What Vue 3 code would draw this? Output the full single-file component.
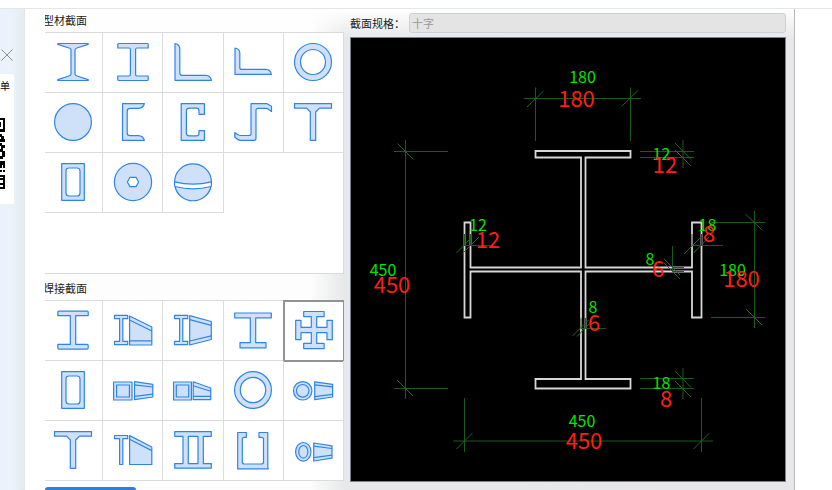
<script setup>
import { ref } from 'vue'

const T_SHAPE = 'M-18.5 -18.3H18.5V-13.8H6.5L2.7 -10V18.3H-2.7V-10L-6.5 -13.8H-18.5Z'
const BOX = 'M-11.3 -18.3H11.3V18.3H-11.3ZM-4 -14Q-7 -14 -7 -11V11Q-7 14 -4 14H4Q7 14 7 11V-11Q7 -14 4 -14Z'
const SMALL_I = 'M-18.5 -14.7H-5.3V-11.3H-10.2V11.3H-5.3V14.7H-18.5V11.3H-13.4V-11.3H-18.5Z'

function ring(r, cx = 0, cy = 0, ry = r) {
  return `M${cx - r} ${cy}a${r} ${ry} 0 1 0 ${2 * r} 0a${r} ${ry} 0 1 0 ${-2 * r} 0Z`
}

const profiles = [
  { name: '工字钢', d: 'M-15.2 -18.5H15.2V-17.6L4 -14Q2 -13.4 2 -12V12Q2 13.4 4 14L15.2 17.6V18.5H-15.2V17.6L-4 14Q-2 13.4 -2 12V-12Q-2 -13.4 -4 -14L-15.2 -17.6Z' },
  { name: 'H型钢', d: 'M-14.2 -18.5H14.2Q15.2 -18.5 15.2 -17.5V-14H4Q2.6 -14 2.6 -12.6V12.6Q2.6 14 4 14H15.2V17.5Q15.2 18.5 14.2 18.5H-14.2Q-15.2 18.5 -15.2 17.5V14H-4Q-2.6 14 -2.6 12.6V-12.6Q-2.6 -14 -4 -14H-15.2V-17.5Q-15.2 -18.5 -14.2 -18.5Z' },
  { name: '等边角钢', d: 'M-18 -18.5Q-13.2 -17.5 -13.2 -13V11Q-13.2 13.3 -11 13.3H13Q17.5 13.5 18.4 18.3H-18Z' },
  { name: '不等边角钢', d: 'M-18 -14Q-13.2 -13 -13.2 -9V5.4Q-13.2 7.4 -11.2 7.4H13Q17.5 7.6 18.4 12.4H-18Z' },
  { name: '圆管', d: ring(18.5) + ring(12.5) },
  { name: '圆钢', d: ring(18.4) },
  { name: '槽钢', d: 'M-10.5 -18.3H11.4Q10 -13.9 5.5 -13.7H-3Q-5.8 -13.7 -5.8 -11V11Q-5.8 13.7 -3 13.7H5.5Q10 13.9 11.4 18.3H-10.5Z' },
  { name: 'C型钢', d: 'M-11.8 -18.3H11.4V-7.7H6V-11Q6 -13.8 3.4 -13.8H-3.6Q-6.6 -13.8 -6.6 -11V11Q-6.6 13.8 -3.6 13.8H3.4Q6 13.8 6 11V8.7H11.4V18.3H-11.8Z' },
  { name: 'Z型钢', d: 'M-2 -18.3H14L18.5 -15.8V-10.5Q15 -13.7 13 -13.7H5Q3 -13.7 3 -11.7V16.3Q3 18.3 1 18.3H-13Q-16 17.5 -18.2 15V10.5Q-15 13.5 -13 13.5H-4Q-2 13.5 -2 11.5Z' },
  { name: 'T型钢', d: T_SHAPE },
  { name: '矩形管', d: BOX },
  { name: '六角孔圆', d: ring(18.6) + 'M-5.6 0L-3 -4.7H3L5.6 0L3 4.7H-3Z' },
  { name: '球', d: 'M-18.4 -.2A18.4 18 0 0 1 18.4 -.2Q0 4.6 -18.4 -.2ZM-18 4.5Q0 9.4 18 4.5A18.4 18 0 0 1 -18 4.5Z', lines: 'M-18.4 -.2V4.5M18.4 -.2V4.5' }
]

const welded = [
  { name: '焊接H型', d: 'M-14.2 -18.9H14.2Q15.2 -18.9 15.2 -17.9V-14.4H2.7V14.4H14.2Q15.2 14.4 15.2 15.4V18.1Q15.2 19.1 14.2 19.1H-14.2Q-15.2 19.1 -15.2 18.1V14.4H-2.7V-14.4H-15.2V-17.9Q-15.2 -18.9 -14.2 -18.9Z' },
  { name: '单坡变截面H型', d: SMALL_I + 'M-3.4 -14L18.8 -3V15H-3.4Z', lines: 'M-3.4 -10L18.8 1M-3.4 10.8H18.8' },
  { name: '双坡变截面H型', d: SMALL_I + 'M-3.3 -14.3L18.3 -8.5V9.5L-3.3 15Z', lines: 'M-3.3 -10.3L18.3 -4.7M-3.3 11L18.3 5.8' },
  { name: '不等翼缘H型', d: 'M-18.3 -17H18.3V-12.2H2.7V12.7H13V17.9H-13V12.7H-2.7V-12.2H-18.3Z' },
  { name: '十字', d: 'M-9.3 -18.5H11.1V-13.4H3.7V-2.7H14V-9.7H19.3V9.7H14V2.7H3.7V13.4H11.1V18.6H-9.3V13.4H-1.7V2.7H-12V9.7H-17.3V-9.7H-12V-2.7H-1.7V-13.4H-9.3Z' },
  { name: '焊接箱形', d: BOX },
  { name: '双坡变截面箱形', d: 'M-19.4 -8H-1V10H-19.4ZM1.5 -8.3L19.8 -5.7V7L1.5 9.7Z', lines: 'M-16.4 -5H-3.6V7H-16.4ZM1.5 -5.2L19.8 -3M1.5 6.4L19.8 4.2' },
  { name: '单坡变截面箱形', d: 'M-19.4 -8H-1.6V10H-19.4ZM.2 -8.2L17.7 -2V9.7H.2Z', lines: 'M-16.7 -5H-4.3V7H-16.7ZM.2 -4.3L17.7 1.3M.2 6.3H17.7' },
  { name: '焊接圆管', d: ring(18.4) + ring(12.7) },
  { name: '变截面圆管', d: ring(9.2, -10.3, 0.8) + 'M1.7 -8.2L19.6 -5.7V7L1.7 9.6Z', lines: ring(6.3, -10.3, 0.8) + 'M1.7 -5.2L19.6 -3.2M1.7 6.6L19.6 4.4' },
  { name: '焊接T型', d: T_SHAPE },
  { name: '变截面T型', d: 'M-18.5 -14.5H-5.3V-11.3H-10.2V14.5H-13.4V-11.3H-18.5ZM-3.4 -14.4L18.8 -3V14.5H-3.4Z', lines: 'M-3.4 -10.8L18.8 .6' },
  { name: '双腹板', d: 'M-18.3 -18.3H18.3V-13.7H10.3V13.6H18.3V18.2H-18.3V13.6H-10V-13.7H-18.3ZM-4.7 -13.7V13.6H5V-13.7Z' },
  { name: 'U型', d: 'M-15.3 -17.5H-6.7V-12.6H-8.7Q-10.7 -12.6 -10.7 -10.6V12Q-10.7 14 -8.7 14H8.5Q10.5 14 10.5 12V-10.6Q10.5 -12.6 8.5 -12.6H6V-17.5H14.8V17.4L15.3 18.9H-15.3Z' },
  { name: '变截面椭圆管', d: ring(7.7, -9.7, 1.8, 9.3) + 'M.7 -7L19 -4.2V8.2L.7 11Z', lines: ring(4.6, -9.7, 1.8, 6.3) + 'M.7 -3.8L19 -1.5M.7 7.6L19 5.2' }
]

const groups = [
  { title: '型材截面', items: profiles },
  { title: '焊接截面', items: welded }
]

const selected = ref('十字')

const dimensionLines = [
  'M535.5 87.5V141M630.5 87.5V141M524 98.5H641',
  'M405.5 140V399M394 151.5H448M394 388.5H448',
  'M464.5 398V452M701.5 398V452M453 441H713',
  'M754.5 211V328M711 222.5H765M711 317.5H765',
  'M640 151.5H694M640 157.5H694M683 140V168',
  'M640 378.5H694M640 388.5H694M683 368V399',
  'M464.5 234V246M470.5 234V246M464 245.5H490',
  'M692 234V246M701.5 234V246M692 245.5H723',
  'M581 318V328M585.5 318V328M581 328.5H606',
  'M672.5 246V272M672 267.5H684M672 271.5H684'
].join('')

const tickLines = [
  'M527 107L543.5 91M622 106L638.5 90',
  'M397.5 143.5L413.5 159.5M397 380L413 396',
  'M456.5 449L472.5 433M693.5 449L709.5 433',
  'M745.5 214L762 230M746 309L762 325',
  'M675 143L691 159.5M675 150L691 166',
  'M675 371L691 387.5M675 381L691 397',
  'M456.5 253L472 237M462.5 253.5L479 237',
  'M684 254L700 238M693.5 253L709 237',
  'M572.5 336L588.5 320M577 336.5L592 321',
  'M664 259L680 275M664 263L680 279'
].join('')

const outline = 'M535.5 151H630.5V157.5H585.5V267.5H692V222.5H701.5V317.5H692V271.5H585.5V379H630.5V388.5H535.5V379H581V271.5H470.5V317.5H464.5V222.5H470.5V267.5H581V157.5H535.5Z'

const sizes = [
  { nominal: '180', at: [582.5, 83], actual: '180', under: [576.5, 107] },
  { nominal: '12', at: [661.5, 160], actual: '12', under: [665, 173] },
  { nominal: '12', at: [478, 231], actual: '12', under: [488, 248] },
  { nominal: '18', at: [707.5, 231], actual: '8', under: [709, 242] },
  { nominal: '450', at: [383, 276], actual: '450', under: [392, 293] },
  { nominal: '8', at: [650, 265], actual: '6', under: [658, 277] },
  { nominal: '180', at: [732.5, 276], actual: '180', under: [741.5, 287] },
  { nominal: '8', at: [593, 313], actual: '6', under: [594, 331] },
  { nominal: '18', at: [661.5, 389], actual: '8', under: [666, 407] },
  { nominal: '450', at: [582, 427], actual: '450', under: [584, 449] }
]
</script>

<template>
  <div class="page">
    <header class="topbar"></header>
    <div class="body">
      <aside class="side">
        <button class="close" aria-label="关闭">
          <svg viewBox="0 0 12 12"><path d="M.5 .5L11.5 11.5M11.5 .5L.5 11.5" /></svg>
        </button>
        <div class="card">
          <span class="card-text">单</span>
          <svg class="code" viewBox="0 0 5 72">
            <path d="M0 0H5V14H0V11H3V2H0ZM0 4H1V9H0ZM0 16H2V18H4V21H5V24H0V21H1V19H0ZM0 25H2V27H5V30H3V33H5V37H2V34H0V31H1V28H0ZM0 38H2V37H5V39H3V41H0ZM0 43H5V50H3V47H2V50H0ZM0 52H2V54H0ZM3 52H5V54H3ZM0 57H5V71H0V69H3V67H0V65H3V62H0V60H3V59H0Z" />
          </svg>
        </div>
      </aside>
      <main class="sheet">
        <div class="dialog">
          <div class="catalog">
            <section v-for="group in groups" :key="group.title" class="group">
              <h2 class="title">{{ group.title }}</h2>
              <div class="cells">
                <button
                  v-for="item in group.items"
                  :key="item.name"
                  class="cell"
                  :class="{ active: item.name === selected }"
                  :aria-label="item.name"
                  :aria-pressed="item.name === selected"
                  @click="selected = item.name"
                >
                  <svg class="shape" viewBox="-20 -20 40 40">
                    <path class="solid" :d="item.d" />
                    <path v-if="item.lines" class="line" :d="item.lines" />
                  </svg>
                </button>
              </div>
            </section>
            <button class="primary" aria-label="确定"></button>
          </div>
          <div class="preview">
            <div class="field">
              <label for="spec">截面规格：</label>
              <input id="spec" type="text" value="十字" disabled />
            </div>
            <svg class="drawing" viewBox="351 38 434 443">
              <path class="outline" :d="outline" />
              <path class="dimension" :d="dimensionLines" />
              <path class="tick" :d="tickLines" />
              <g v-for="(size, i) in sizes" :key="i">
                <text class="nominal" :x="size.at[0]" :y="size.at[1]">{{ size.nominal }}</text>
                <text class="actual" :x="size.under[0]" :y="size.under[1]">{{ size.actual }}</text>
              </g>
            </svg>
          </div>
        </div>
      </main>
    </div>
  </div>
</template>

<style>
body {
  margin: 0;
  background: #fff;
}
</style>

<style scoped>
.page {
  display: flex;
  flex-direction: column;
  height: 100vh;
  overflow: hidden;
  font-family: "Noto Sans CJK SC", "Noto Sans", sans-serif;
  font-size: 11px;
  color: #222;
}
.topbar {
  flex: none;
  height: 8px;
  border-bottom: 1px solid #e5e5e5;
}
.body {
  flex: 1;
  display: flex;
  min-height: 0;
}
.side {
  flex: none;
  width: 24px;
  border-right: 1px solid #dfe5eb;
  background: linear-gradient(to right, #eaf3fd, #ebf1f9 60%, #e4eaf0);
}
.close {
  display: block;
  width: 13px;
  height: 12px;
  margin: 40px 0 13px;
  padding: 0 0 0 1px;
  border: 0;
  background: none;
}
.close svg {
  display: block;
  fill: none;
  stroke: #8f8f8f;
}
.card {
  display: flow-root;
  width: 14px;
  height: 130px;
  background: #fff;
}
.card-text {
  display: block;
  height: 24px;
  font-size: 10px;
  line-height: 24px;
  color: #000;
}
.code {
  display: block;
  width: 5px;
  height: 72px;
  margin-top: 20px;
}
.sheet {
  flex: 1;
  min-width: 0;
  padding: 0 37px 0 20px;
}
.dialog {
  display: flex;
  gap: 6px;
  height: 100%;
  box-sizing: border-box;
  padding-right: 8px;
  border-right: 1px solid #b9b9b9;
  background:
    linear-gradient(to bottom, #fff, rgba(255, 255, 255, 0) 30px),
    linear-gradient(to right, #fdfdfd, #fdfdfd 265px, #e7e8e9 300px, #e7e7e9);
}
.catalog {
  flex: none;
  width: 299px;
  overflow: hidden;
}
.group {
  margin-left: -2px;
}
.title {
  height: 23px;
  margin: 0;
  font-size: 11px;
  font-weight: 400;
  line-height: 23px;
}
.group + .group .title {
  padding-top: 3px;
}
.cells {
  display: grid;
  grid-template-columns: repeat(5, minmax(0, 1fr));
  grid-auto-rows: 60px;
  background: #fff;
  border-top: 1px solid #d9d9d9;
  box-shadow: inset -1px 0 #d9d9d9;
}
.group:first-child .cells {
  min-height: 240px;
  border-bottom: 1px solid #d9d9d9;
}
.cell {
  display: flex;
  align-items: center;
  justify-content: center;
  padding: 0 0 1px;
  border: solid #dcdcdc;
  border-width: 0 1px 1px 0;
  background: none;
}
.cell.active {
  outline: 2px solid #929292;
  outline-offset: -1px;
}
.shape {
  width: 40px;
  height: 40px;
  overflow: visible;
  stroke: #2f84e8;
  stroke-width: 1.2;
  stroke-linejoin: round;
}
.solid {
  fill: #cfe1f9;
  fill-rule: evenodd;
}
.line {
  fill: none;
}
.primary {
  display: block;
  width: 91px;
  height: 24px;
  margin-top: 6px;
  border: 0;
  border-radius: 3px;
  background: #2c7fe0;
}
.preview {
  flex: 1;
  min-width: 0;
}
.field {
  display: flex;
  align-items: center;
  justify-content: space-between;
  gap: 4px;
  padding: 4px 0;
}
.field label {
  flex: none;
  width: 55px;
  line-height: 20px;
}
.field input {
  flex: 1;
  min-width: 0;
  height: 20px;
  box-sizing: border-box;
  padding: 0 2px;
  border: 1px solid #c9d0dc;
  border-radius: 3px;
  background: #e4e4e4;
  color: #999;
  font: inherit;
}
.drawing {
  display: block;
  width: 100%;
  box-sizing: border-box;
  border: 1px solid #7d838e;
  background: #000;
  fill: none;
}
.outline {
  stroke: #d6d6d6;
  stroke-width: 1.8;
}
.dimension {
  stroke: #1b5a1b;
}
.tick {
  stroke: #226a22;
}
.nominal,
.actual {
  text-anchor: middle;
}
.nominal {
  fill: #00e600;
  font-size: 16px;
}
.actual {
  fill: #ff1e14;
  font-size: 22px;
}
</style>
